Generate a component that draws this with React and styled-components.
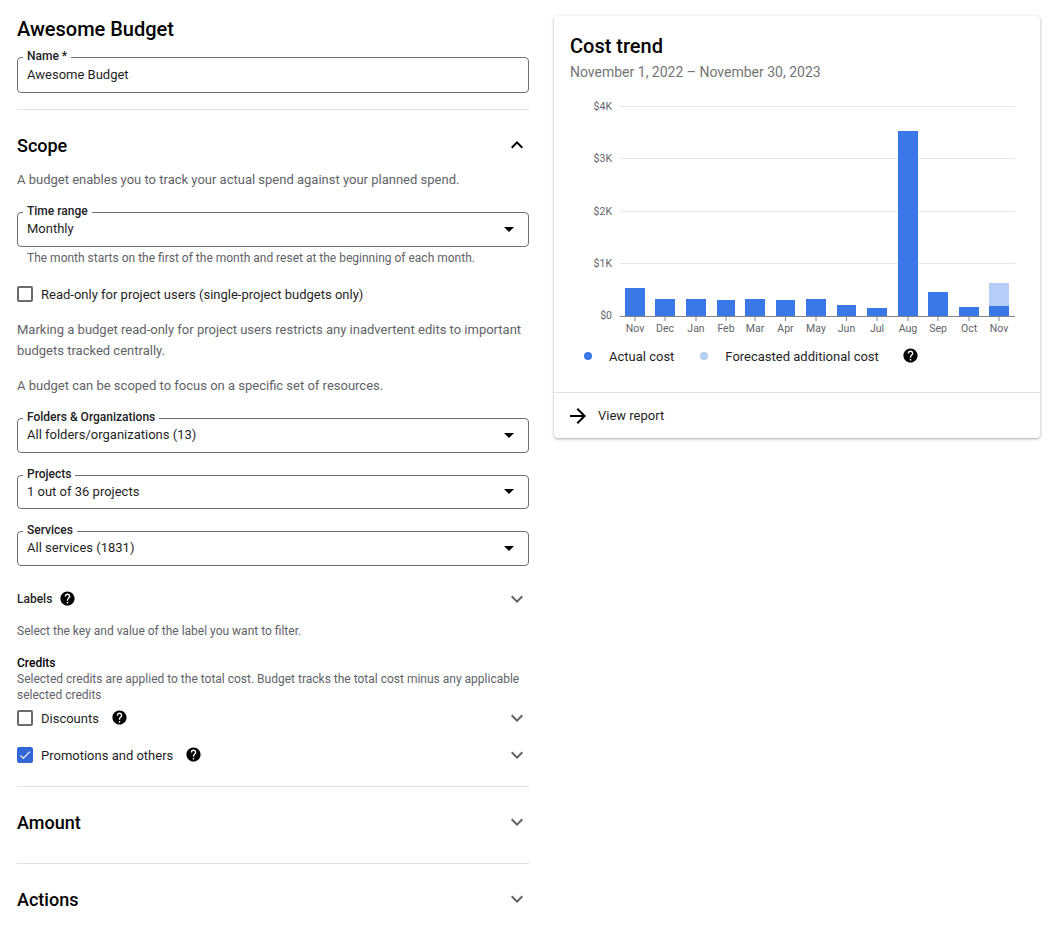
import styled, { createGlobalStyle } from 'styled-components';
import { MdArrowDropDown, MdArrowForward, MdCheck, MdExpandLess, MdExpandMore, MdHelp } from 'react-icons/md';

const GlobalStyle = createGlobalStyle`
	html, body {
		margin: 0;
		background: #fff;
		font-family: Roboto, "Liberation Sans", sans-serif;
		color: #000;
	}
	* {
		box-sizing: border-box;
	}
`;

const Page = styled.div`
	display: grid;
	grid-template-columns: 512px 486px;
	column-gap: 25px;
	align-items: start;
	width: 1056px;
	height: 937px;
	padding: 0 17px;
	overflow: hidden;
`;

const Form = styled.div`
	display: flex;
	flex-direction: column;
`;

const PageTitle = styled.h1`
	margin: 17px 0 0;
	font-size: 20px;
	line-height: 24px;
	font-weight: 500;
`;

const Field = styled.div`
	position: relative;
	display: flex;
	align-items: center;
	justify-content: space-between;
	height: ${(p) => p.$h || 35}px;
	margin-top: ${(p) => p.$mt}px;
	padding: 0 9px 2px;
	border: 1px solid #6b7075;
	border-radius: 4px;
	font-size: 13px;
	color: #1f1f1f;
	svg {
		margin-right: -2px;
		font-size: 24px;
		color: #000;
	}
`;

const FieldLabel = styled.label`
	position: absolute;
	top: -9px;
	left: 5px;
	padding: 0 4px;
	background: #fff;
	font-size: 12px;
	line-height: 14px;
	font-weight: 500;
	color: #202124;
`;

const Divider = styled.div`
	height: 1px;
	margin-top: ${(p) => p.$mt}px;
	background: #e0e0e0;
`;

const SectionHead = styled.div`
	display: flex;
	align-items: center;
	justify-content: space-between;
	height: 24px;
	margin-top: ${(p) => p.$mt}px;
	font-size: 18px;
	font-weight: 500;
	svg {
		font-size: 24px;
		color: ${(p) => (p.$open ? '#000' : '#5f6368')};
	}
`;

const Text = styled.p`
	margin: ${(p) => p.$mt}px 0 0;
	font-size: ${(p) => p.$size || 13}px;
	line-height: ${(p) => p.$lh || 20}px;
	color: #5f6368;
`;

const Hint = styled.p`
	margin: 3px 0 0 10px;
	font-size: 12px;
	line-height: 16px;
	color: #5f6368;
`;

const Row = styled.div`
	display: flex;
	align-items: center;
	height: ${(p) => p.$h || 24}px;
	margin-top: ${(p) => p.$mt}px;
	font-size: 13px;
	color: #1f1f1f;
`;

const Box = styled.span`
	display: flex;
	align-items: center;
	justify-content: center;
	flex: none;
	width: 16px;
	height: 16px;
	margin-right: 8px;
	border: ${(p) => (p.$checked ? 'none' : '2px solid #6b6b6b')};
	border-radius: 2px;
	background: ${(p) => (p.$checked ? '#3367d6' : '#fff')};
	color: #fff;
	font-size: 14px;
`;

const Help = styled(MdHelp)`
	flex: none;
	margin-left: ${(p) => p.$ml}px;
	margin-bottom: 2px;
	font-size: 17px;
	color: #000;
`;

const Chevron = styled(MdExpandMore)`
	flex: none;
	margin-left: auto;
	font-size: 24px;
	color: #5f6368;
`;

const SubLabel = styled.div`
	margin-top: ${(p) => p.$mt || 0}px;
	font-size: 12px;
	line-height: 16px;
	font-weight: 500;
`;

const Card = styled.section`
	display: flex;
	flex-direction: column;
	height: 422px;
	margin-top: 16px;
	border-radius: 4px;
	background: #fff;
	box-shadow: 0 1px 2px rgba(60, 64, 67, 0.3), 0 1px 3px 1px rgba(60, 64, 67, 0.12);
`;

const CardTitle = styled.h2`
	margin: 18px 16px 0;
	font-size: 20px;
	line-height: 24px;
	font-weight: 500;
`;

const DateRange = styled.div`
	margin: 4px 16px 0;
	font-size: 14px;
	line-height: 20px;
	color: #757575;
`;

const Chart = styled.svg`
	display: block;
	flex: none;
	margin-top: 14px;
	text {
		font-family: Roboto, "Liberation Sans", sans-serif;
		font-size: 10.5px;
		fill: #5f6368;
	}
`;

const Legend = styled.div`
	display: flex;
	align-items: center;
	height: 20px;
	margin-top: 6px;
	padding-left: 30px;
	font-size: 13px;
	color: #1f1f1f;
`;

const Dot = styled.span`
	width: 8px;
	height: 8px;
	margin-right: 17px;
	border-radius: 50%;
	background: ${(p) => p.$color};
`;

const LegendName = styled.span`
	margin-right: ${(p) => p.$mr}px;
`;

const CardFooter = styled.div`
	display: flex;
	align-items: center;
	gap: 8px;
	margin-top: auto;
	height: 46px;
	padding: 0 16px 0 16px;
	border-top: 1px solid #e0e0e0;
	font-size: 13px;
	color: #1f1f1f;
	svg {
		flex: none;
		margin-left: -4px;
		font-size: 24px;
		color: #000;
	}
`;

const bars = [
	['Nov', 71, 91, 288],
	['Dec', 101, 121, 299],
	['Jan', 132, 152, 299],
	['Feb', 163, 181, 300],
	['Mar', 191, 211, 299],
	['Apr', 222, 241, 300],
	['May', 252, 272, 299],
	['Jun', 283, 302, 305],
	['Jul', 313, 333, 308],
	['Aug', 344, 364, 131],
	['Sep', 374, 394, 292],
	['Oct', 405, 425, 307],
	['Nov', 435, 455, 306],
];

const grid = [
	['$4K', 106.5],
	['$3K', 158.5],
	['$2K', 211.5],
	['$1K', 263.5],
];

// chart origin in the page: x 554, y 96
const CostChart = () => (
	<Chart width="486" height="244" viewBox="0 96 486 244">
		{grid.map(([label, y]) => (
			<g key={label}>
				<line x1="66" x2="461" y1={y} y2={y} stroke="#e6e6e6" />
				<text x="58" y={y + 3} textAnchor="end">{label}</text>
			</g>
		))}
		<text x="58" y="319" textAnchor="end">$0</text>
		{bars.map(([month, x1, x2, top], i) => (
			<g key={i}>
				<rect x={x1} y={top} width={x2 - x1} height={316 - top} fill="#3b78e7" />
				<line x1={(x1 + x2) / 2} x2={(x1 + x2) / 2} y1="316" y2="321" stroke="#80868b" />
				<text x={(x1 + x2) / 2} y="332" textAnchor="middle">{month}</text>
			</g>
		))}
		<rect x="435" y="283" width="20" height="23" fill="#b6cdf7" />
		<line x1="66" x2="461" y1="316.5" y2="316.5" stroke="#80868b" />
	</Chart>
);

const Select = ({ label, value, mt, h }) => (
	<Field $mt={mt} $h={h}>
		<FieldLabel>{label}</FieldLabel>
		{value}
		<MdArrowDropDown />
	</Field>
);

const App = () => {
	return (
		<>
			<GlobalStyle />
			<Page>
				<Form>
					<PageTitle>Awesome Budget</PageTitle>
					<Field $mt={16} $h={36}>
						<FieldLabel>Name *</FieldLabel>
						Awesome Budget
					</Field>
					<Divider $mt={16} />

					<SectionHead $mt={23} $open>
						Scope
						<MdExpandLess />
					</SectionHead>
					<Text $mt={13}>A budget enables you to track your actual spend against your planned spend.</Text>
					<Select label="Time range" value="Monthly" mt={22} />
					<Hint>The month starts on the first of the month and reset at the beginning of each month.</Hint>
					<Row $mt={18} $h={20}>
						<Box />
						Read-only for project users (single-project budgets only)
					</Row>
					<Text $mt={15} $lh={21}>
						Marking a budget read-only for project users restricts any inadvertent edits to important budgets tracked centrally.
					</Text>
					<Text $mt={15}>A budget can be scoped to focus on a specific set of resources.</Text>
					<Select label="Folders & Organizations" value="All folders/organizations (13)" mt={22} />
					<Select label="Projects" value="1 out of 36 projects" mt={22} h={34} />
					<Select label="Services" value="All services (1831)" mt={22} />

					<Row $mt={21}>
						<SubLabel>Labels</SubLabel>
						<Help $ml={7} />
						<Chevron />
					</Row>
					<Text $mt={10} $size={12}>Select the key and value of the label you want to filter.</Text>
					<SubLabel $mt={14}>Credits</SubLabel>
					<Text $mt={0} $lh={16} $size={12}>
						Selected credits are applied to the total cost. Budget tracks the total cost minus any applicable selected credits
					</Text>
					<Row $mt={3}>
						<Box />
						Discounts
						<Help $ml={12} />
						<Chevron />
					</Row>
					<Row $mt={13}>
						<Box $checked><MdCheck /></Box>
						Promotions and others
						<Help $ml={12} />
						<Chevron />
					</Row>
					<Divider $mt={19} />

					<SectionHead $mt={23}>
						Amount
						<MdExpandMore />
					</SectionHead>
					<Divider $mt={29} />
					<SectionHead $mt={23}>
						Actions
						<MdExpandMore />
					</SectionHead>
				</Form>

				<Card>
					<CardTitle>Cost trend</CardTitle>
					<DateRange>November 1, 2022 – November 30, 2023</DateRange>
					<CostChart />
					<Legend>
						<Dot $color="#3b78e7" />
						<LegendName $mr={26}>Actual cost</LegendName>
						<Dot $color="#b6cdf7" />
						<LegendName $mr={23}>Forecasted additional cost</LegendName>
						<Help $ml={0} />
					</Legend>
					<CardFooter>
						<MdArrowForward />
						View report
					</CardFooter>
				</Card>
			</Page>
		</>
	);
};

export default App;
